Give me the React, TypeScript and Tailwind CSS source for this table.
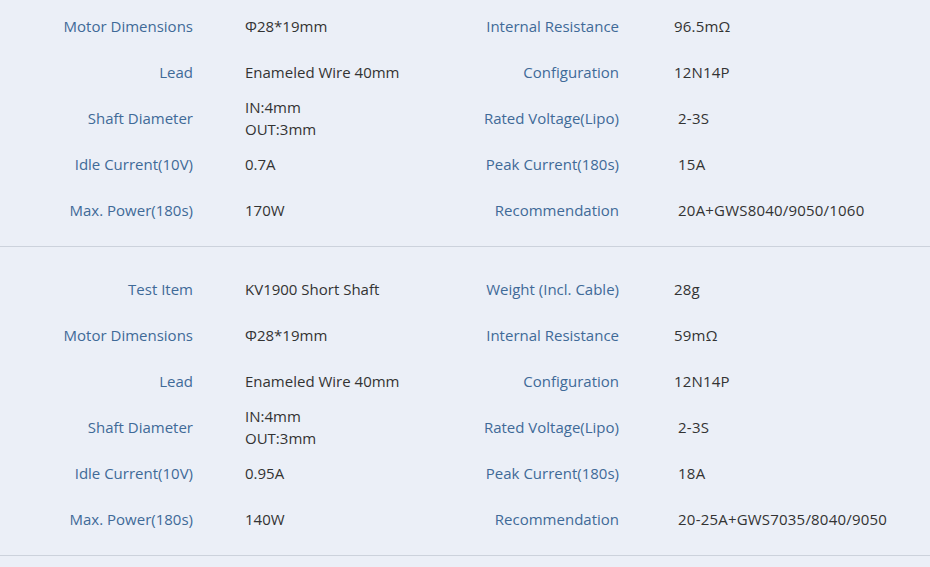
type Row = { label: string; value: string[]; label2: string; value2: string };

const sectionOne: Row[] = [
  { label: 'Motor Dimensions', value: ['Φ28*19mm'], label2: 'Internal Resistance', value2: '96.5mΩ' },
  { label: 'Lead', value: ['Enameled Wire 40mm'], label2: 'Configuration', value2: '12N14P' },
  { label: 'Shaft Diameter', value: ['IN:4mm', 'OUT:3mm'], label2: 'Rated Voltage(Lipo)', value2: '\u00a02-3S' },
  { label: 'Idle Current(10V)', value: ['0.7A'], label2: 'Peak Current(180s)', value2: '\u00a015A' },
  { label: 'Max. Power(180s)', value: ['170W'], label2: 'Recommendation', value2: '\u00a020A+GWS8040/9050/1060' },
];

const sectionTwo: Row[] = [
  { label: 'Test Item', value: ['KV1900 Short Shaft'], label2: 'Weight (Incl. Cable)', value2: '28g' },
  { label: 'Motor Dimensions', value: ['Φ28*19mm'], label2: 'Internal Resistance', value2: '59mΩ' },
  { label: 'Lead', value: ['Enameled Wire 40mm'], label2: 'Configuration', value2: '12N14P' },
  { label: 'Shaft Diameter', value: ['IN:4mm', 'OUT:3mm'], label2: 'Rated Voltage(Lipo)', value2: '\u00a02-3S' },
  { label: 'Idle Current(10V)', value: ['0.95A'], label2: 'Peak Current(180s)', value2: '\u00a018A' },
  { label: 'Max. Power(180s)', value: ['140W'], label2: 'Recommendation', value2: '\u00a020-25A+GWS7035/8040/9050' },
];

function SpecTable({ rows, className }: { rows: Row[]; className: string }) {
  return (
    <div className={`border-b border-[#ccd2dc] ${className}`}>
      {rows.map((r) => (
        <div key={r.label + r.label2} className="grid grid-cols-[193px_265px_161px_1fr] h-[46px] items-center whitespace-nowrap">
          <div className="text-right text-[#3f6a98]">{r.label}</div>
          <div className="pl-[52px] text-[#333] leading-[22px]">
            {r.value.map((v) => (
              <div key={v}>{v}</div>
            ))}
          </div>
          <div className="text-right text-[#3f6a98]">{r.label2}</div>
          <div className="pl-[55px] text-[#333] tracking-[0.2px]">{r.value2}</div>
        </div>
      ))}
    </div>
  );
}

export default function App() {
  return (
    <div className="w-[930px] h-[567px] overflow-hidden bg-[#ebeff7] text-[15px] font-['Open_Sans',sans-serif]">
      <SpecTable rows={sectionOne} className="pt-[3px] pb-[13px]" />
      <SpecTable rows={sectionTwo} className="pt-[19px] pb-[13px]" />
    </div>
  );
}
